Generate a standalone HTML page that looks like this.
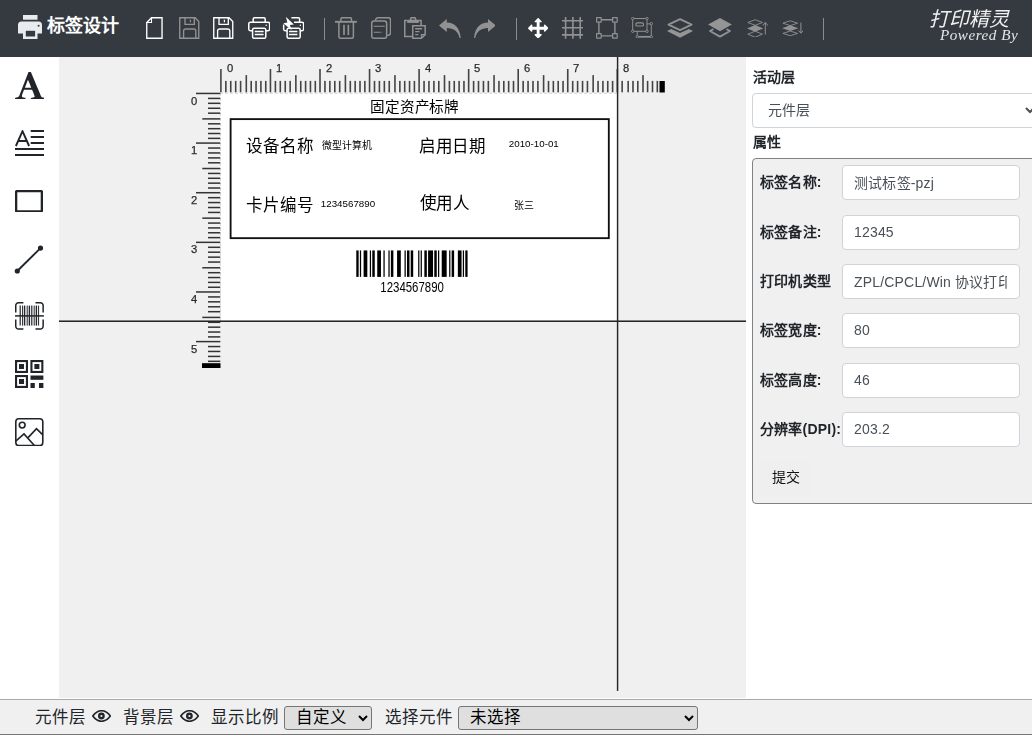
<!DOCTYPE html>
<html lang="zh-CN">
<head>
<meta charset="utf-8">
<title>标签设计</title>
<style>
*{box-sizing:border-box}
html,body{margin:0;padding:0}
body{width:1032px;height:735px;overflow:hidden;position:relative;background:#fff;font-family:"Liberation Sans",sans-serif;font-size:14px;color:#212529;line-height:1.5}
.abs{position:absolute}
#hdr{position:absolute;left:0;top:0;width:1032px;height:57px;background:#343a40}
#title{position:absolute;left:47.3px;top:13px;color:#fff;font-weight:bold;font-size:18px;line-height:27px;white-space:nowrap}
.sep{position:absolute;width:1px;background:#8a8d90}
#brand1{position:absolute;left:929px;top:7px;color:#f0f0f0;will-change:transform;font-size:20px;line-height:24px;font-style:italic;white-space:nowrap}
#brand2{position:absolute;left:940px;top:26px;color:#e6e6e6;will-change:transform;font-family:"Liberation Serif",serif;font-style:italic;font-size:15.2px;line-height:18px;white-space:nowrap;letter-spacing:.5px}
#canvas{position:absolute;left:59px;top:57px;width:687px;height:641px;background:#f0f0f0}
#paper{position:absolute;left:220px;top:93px;width:397px;height:228px;background:#fff;border-left:1px dashed #dcdcdc;border-top:1px dashed #dcdcdc}
.lt{position:absolute;white-space:nowrap;color:#000;line-height:1}
.rn{position:absolute;font-size:11.7px;line-height:12px;color:#2b2b2b;-webkit-text-stroke:.25px #2b2b2b;white-space:nowrap;transform:scaleX(.96);transform-origin:0 0}
#side{position:absolute;left:0;top:57px;width:59px;height:642px;background:#fff}
#right{position:absolute;left:746px;top:57px;width:286px;height:642px;background:#fff;overflow:hidden;will-change:transform}
#rin{position:absolute;left:-746px;top:-57px;width:1100px;height:735px}
.rl{position:absolute;font-weight:bold;font-size:14px;line-height:21px;white-space:nowrap;color:#212529;letter-spacing:.2px}
select.fc,input.fc{position:absolute;height:35px;font-family:"Liberation Sans",sans-serif;font-size:14px;line-height:21px;color:#495057;background:#fff;border:1px solid #ced4da;border-radius:4px;padding:5px 12px 7px 11px;margin:0;outline:none;letter-spacing:.18px}
#fs{position:absolute;left:752px;top:158px;width:300px;height:346px;background:#f0f0f0;border:1px solid #828282;border-radius:4px}
#btn{position:absolute;left:759px;top:461px;width:54px;height:33.5px;background:#efefef;border:0;border-radius:4px;font-size:14px;line-height:33.5px;text-align:center;color:#111;font-family:"Liberation Sans",sans-serif;padding:0}
#bar{position:absolute;left:0;top:699px;width:1032px;height:35px;background:#f0f0f0;border-top:1px solid #a9a9a9}
#barb{position:absolute;left:0;top:734px;width:1032px;height:1px;background:#767676}
.bt{position:absolute;font-size:16.5px;line-height:24px;top:705.4px;white-space:nowrap;color:#212529}
select.bs{position:absolute;top:706px;height:24px;font-family:"Liberation Sans",sans-serif;font-size:16.5px;color:#000;background:#dfdfdf;border:1px solid #767676;border-radius:3px;margin:0;padding:0 4px 2px 7px}
</style>
</head>
<body>
<div id="hdr">
<svg class="abs" style="left:18px;top:15px" width="24" height="24.2" viewBox="0 0 24 24.2"><g fill="#e9ecef"><rect x="5" y="0" width="14.5" height="4.7"/><path d="M3.5 6.4H20.5A3.5 3.5 0 0 1 24 9.9V18.6H0V9.9A3.5 3.5 0 0 1 3.5 6.4Z"/><rect x="5" y="13.4" width="14.5" height="10.8"/></g><rect x="7.8" y="15.8" width="9.3" height="5.7" fill="#343a40"/><circle cx="20.6" cy="10.8" r="1" fill="#343a40"/></svg>
<svg class="abs" style="left:146.2px;top:17px" width="16.8" height="22" viewBox="0 0 16.8 22" fill="none" stroke="#fff" stroke-width="1.35" ><path d="M5.5 .75H16.05V21.25H.75V5.5Z"/><path d="M.75 5.5H5.5V.75" stroke-width="1.1"/></svg>
<svg class="abs" style="left:179.2px;top:17px" width="20.5" height="22" viewBox="0 0 20.5 22" fill="none" stroke="#929292" stroke-width="1.35" ><path d="M.75 .75H16L19.75 4.5V21.25H.75Z"/><path d="M6 .75V7.4H15.3V.75"/><path d="M11.4 2.7V5.3" stroke-width="1.2"/><path d="M4.6 21.25V14a2 2 0 0 1 2-2H14.8a2 2 0 0 1 2 2V21.25"/></svg>
<svg class="abs" style="left:213.4px;top:17px" width="20.5" height="22" viewBox="0 0 20.5 22" fill="none" stroke="#fff" stroke-width="1.35" ><path d="M.75 .75H16L19.75 4.5V21.25H.75Z"/><path d="M6 .75V7.4H15.3V.75"/><path d="M11.4 2.7V5.3" stroke-width="1.2"/><path d="M4.6 21.25V14a2 2 0 0 1 2-2H14.8a2 2 0 0 1 2 2V21.25"/></svg>
<svg class="abs" style="left:247.5px;top:17px" width="22.4" height="22" viewBox="0 0 22.4 22" fill="none" stroke="#fff" stroke-width="1.5" color="#fff"><path d="M5.2 5.2V2a1.25 1.25 0 0 1 1.25-1.25H15.95a1.25 1.25 0 0 1 1.25 1.25V5.2"/><path d="M4.6 13.7H2.5a1.75 1.75 0 0 1-1.75-1.75V6.95a1.75 1.75 0 0 1 1.75-1.75H19.9a1.75 1.75 0 0 1 1.75 1.75V11.95a1.75 1.75 0 0 1-1.75 1.75H17.8"/><rect x="4.6" y="11.2" width="13.2" height="10.1" rx="1.6"/><path d="M6.8 14.5H15.6M6.8 17.5H15.6" stroke-width="1.3"/><circle cx="18.2" cy="8.3" r=".75" fill="currentColor" stroke="none"/></svg>
<svg class="abs" style="left:282.1px;top:17px" width="22.4" height="22" viewBox="0 0 22.4 22" fill="none" stroke="#fff" stroke-width="1.5" color="#fff"><path d="M9.4 .75H16.35a1.25 1.25 0 0 1 1.25 1.25V5.2"/><path d="M4.9 13.7H3.4a1.75 1.75 0 0 1-1.75-1.75V7.4M12 5.2H19.9a1.75 1.75 0 0 1 1.75 1.75V11.95a1.75 1.75 0 0 1-1.75 1.75H18.2"/><rect x="5.1" y="11.2" width="13.1" height="10.1" rx="1.6"/><path d="M7 14.5H15.4M7 17.5H15.4" stroke-width="1.3"/><circle cx="18.3" cy="8.3" r=".75" fill="currentColor" stroke="none"/><path d="M3.8 -.2L11.9 7.5L7.9 7.9L9.6 13.3L1.4 6.2L5.4 5.6Z" fill="#fff" stroke="none"/></svg>
<svg class="abs" style="left:335.1px;top:17px" width="21.9" height="22" viewBox="0 0 21.9 22" fill="none" stroke="#929292" stroke-width="1.5" ><path d="M5.9 4.8V2a1.25 1.25 0 0 1 1.25-1.25H15.25a1.25 1.25 0 0 1 1.25 1.25V4.8"/><path d="M0 4.8H21.9" stroke-width="1.9"/><path d="M3.9 4.8V19.75a1.5 1.5 0 0 0 1.5 1.5H16.9a1.5 1.5 0 0 0 1.5-1.5V4.8"/><path d="M9 7.8V17.9M13.35 7.8V17.9" stroke-width="1.7"/></svg>
<svg class="abs" style="left:370.8px;top:17px" width="20.3" height="22" viewBox="0 0 20.3 22" fill="none" stroke="#929292" stroke-width="1.5" ><path d="M4.6 3.6V3a2.25 2.25 0 0 1 2.25-2.25H17.3a2.25 2.25 0 0 1 2.25 2.25V16a2.25 2.25 0 0 1-2.25 2.25H16.2"/><rect x=".75" y="3.95" width="14.9" height="17.3" rx="2.25"/><path d="M2.8 9.3H13.8M2.8 15.2H9.4M10.4 15.2H11.2" stroke-width="1.1"/></svg>
<svg class="abs" style="left:404.4px;top:17px" width="21.9" height="22" viewBox="0 0 21.9 22" fill="none" stroke="#929292" stroke-width="1.5" ><path d="M3.2 3.6H.75V19.5H8.6M14.9 3.6H17.1V8.2"/><path d="M6.6 2.9V1.9a1.2 1.2 0 0 1 1.2-1.2H10.4a1.2 1.2 0 0 1 1.2 1.2V2.9" /><rect x="3.2" y="2.7" width="11.7" height="3.2" fill="#929292" stroke="none"/><path d="M8.75 8.75H21.15V17.6L17.4 21.25H8.75Z"/><path d="M21.15 17.6H17.4V21.25" stroke-width="1.1"/><path d="M11.2 11.7H18.1M11.2 14.6H15.5M11.2 17.6H14.4" stroke-width="1.4"/></svg>
<svg class="abs" style="left:439.4px;top:19px" width="21.8" height="19" viewBox="0 0 21.8 19"><path fill="#929292" d="M0 6.5L7.8 0V3.4C15.5 3.4 21.2 9 21.7 18.9H20.5C19.5 12.5 14.5 9 7.8 9V13Z"/></svg>
<svg class="abs" style="left:473.7px;top:19px" width="21.8" height="19" viewBox="0 0 21.8 19"><path transform="translate(21.8,0) scale(-1,1)" fill="#929292" d="M0 6.5L7.8 0V3.4C15.5 3.4 21.2 9 21.7 18.9H20.5C19.5 12.5 14.5 9 7.8 9V13Z"/></svg>
<svg class="abs" style="left:528px;top:17.8px" width="20.3" height="20.4" viewBox="0 -1536 1792 1792" preserveAspectRatio="none"><path transform="scale(1,-1)" fill="#fff" d="M1792 640C1792 657 1785 673 1773 685L1517 941C1505 953 1489 960 1472 960C1437 960 1408 931 1408 896V768H1024V1152H1152C1187 1152 1216 1181 1216 1216C1216 1233 1209 1249 1197 1261L941 1517C929 1529 913 1536 896 1536C879 1536 863 1529 851 1517L595 1261C583 1249 576 1233 576 1216C576 1181 605 1152 640 1152H768V768H384V896C384 931 355 960 320 960C303 960 287 953 275 941L19 685C7 673 0 657 0 640C0 623 7 607 19 595L275 339C287 327 303 320 320 320C355 320 384 349 384 384V512H768V128H640C605 128 576 99 576 64C576 47 583 31 595 19L851 -237C863 -249 879 -256 896 -256C913 -256 929 -249 941 -237L1197 19C1209 31 1216 47 1216 64C1216 99 1187 128 1152 128H1024V512H1408V384C1408 349 1437 320 1472 320C1489 320 1505 327 1517 339L1773 595C1785 607 1792 623 1792 640Z"/></svg>
<svg class="abs" style="left:561.6px;top:17px" width="21.5" height="21.8" viewBox="0 0 21.5 21.8" fill="none" stroke="#929292" stroke-width="1.6" ><path d="M3.6 0V21.8M10.9 0V21.8M18.2 0V21.8M0 3.8H21.5M0 10.7H21.5M0 17.9H21.5"/></svg>
<svg class="abs" style="left:596.2px;top:17px" width="21.8" height="22" viewBox="0 0 21.8 22" fill="none" stroke="#929292" stroke-width="1.2" ><path d="M5.4 2.7H16.4M5.4 18.9H16.4M2.9 5.4V16.4M18.9 5.4V16.4" stroke-width="1.4"/><rect x=".6" y=".6" width="4.6" height="4.6" rx=".4"/><rect x="16.6" y=".6" width="4.6" height="4.6" rx=".4"/><rect x=".6" y="16.6" width="4.6" height="4.6" rx=".4"/><rect x="16.6" y="16.6" width="4.6" height="4.6" rx=".4"/></svg>
<svg class="abs" style="left:630.7px;top:16.9px" width="22.2" height="21.4" viewBox="0 0 22.2 21.4" fill="none" stroke="#929292" stroke-width="1.0" ><rect x="1.7" y="1.5" width="14.3" height="12.8"/><rect x="4.9" y="5.9" width="7.6" height="3.1" rx="1.3" stroke-width="1.1"/><path d="M16 6.9H20.3M20.3 6.9V19.8M6.25 19.8V14.3"/><path d="M6.25 19.8H20.3" stroke-width="1.7"/><g fill="#343a40" stroke-width=".9"><circle cx="1.7" cy="1.5" r="1.2"/><circle cx="16" cy="1.5" r="1.2"/><circle cx="1.7" cy="14.3" r="1.2"/><circle cx="16" cy="14.3" r="1.2"/><circle cx="20.3" cy="6.7" r="1.2"/><circle cx="20.3" cy="19.8" r="1.2"/><circle cx="6.25" cy="19.8" r="1.2"/></g></svg>
<svg class="abs" style="left:667px;top:17.9px" width="26.2" height="20" viewBox="0 0 26.2 20" fill="none" stroke="#929292" stroke-width="1.5" ><path d="M1.5 6.6L13.05 1.1L24.6 6.6L13.05 12.1Z" stroke-width="1.9" stroke-linejoin="round"/><path d="M0 13L4.1 10.9L13.05 15.1L22 10.9L26.1 13L13.05 19.8Z" fill="#959595" stroke="none"/></svg>
<svg class="abs" style="left:708.2px;top:17.9px" width="24.2" height="20" viewBox="0 0 24.2 20" fill="none" stroke="#929292" stroke-width="1.5" ><path d="M.1 6.6L12 0L23.9 6.6L12 13.15Z" fill="#959595" stroke="none"/><path d="M4.8 11.5L2 13L12 18.6L22 13L19.2 11.5" stroke-width="1.9" stroke-linejoin="round" stroke-linecap="round"/></svg>
<svg class="abs" style="left:747.1px;top:18.5px" width="21.4" height="18.7" viewBox="0 0 21.4 18.7" fill="none" stroke="#929292" stroke-width="1.5" ><path d="M0.8 3.5L8.15 0.6999999999999998L15.5 3.5L8.15 6.3Z" stroke-width=".9"/><path d="M0.0 9.4L8.15 6.0L16.3 9.4L8.15 12.8Z" fill="#929292" stroke="none"/><path d="M0.8 15.2L8.15 12.2L15.5 15.2L8.15 18.2Z" stroke-width=".9"/><path d="M18.3 15.6V3.6M15.9 6.4L18.3 3.4L20.9 6.6" stroke-width="1"/></svg>
<svg class="abs" style="left:781.6px;top:19.6px" width="21.8" height="16.4" viewBox="0 0 21.8 16.4" fill="none" stroke="#929292" stroke-width="1.5" ><path d="M0.8999999999999997 3.2L8.25 0.8000000000000004L15.599999999999998 3.2L8.25 5.6Z" stroke-width=".9"/><path d="M0.09999999999999964 8.2L8.25 5.299999999999999L16.4 8.2L8.25 11.1Z" fill="#929292" stroke="none"/><path d="M0.8999999999999997 13.4L8.25 11.05L15.599999999999998 13.4L8.25 15.749999999999998Z" stroke-width=".9"/><path d="M18.9 2.6V12.9M16.4 10.4L18.9 13.2L21.4 10.4" stroke-width="1"/></svg>
<div id="title">标签设计</div>
<div class="sep" style="left:324px;top:18px;height:22px"></div>
<div class="sep" style="left:516px;top:18px;height:22px"></div>
<div class="sep" style="left:823px;top:18px;height:22px"></div>
<div id="brand1">打印精灵</div>
<div id="brand2">Powered By</div>
</div>
<div id="side">
</div>
<svg class="abs" style="left:14.6px;top:71.5px" width="29.7" height="27.3" viewBox="0 -1408 1664 1536" preserveAspectRatio="none"><path transform="scale(1,-1)" fill="#212529" d="M725 977C796 832 857 677 909 525C890 524 871 523 852 523C753 523 654 526 555 527ZM0 -128C63 -128 125 -125 188 -114C202 -112 222 -106 236 -106C352 -106 469 -126 585 -126C586 -117 587 -108 587 -99C587 -79 587 -60 586 -41C529 -33 382 -30 382 47C382 85 483 347 509 405L959 403C975 362 1104 65 1104 29C1104 -8 1051 -15 1024 -21L893 -49C890 -75 889 -101 889 -127C1020 -123 1151 -112 1282 -112C1409 -112 1536 -128 1663 -128C1663 -119 1664 -111 1664 -102C1664 -83 1661 -64 1658 -45C1611 -27 1519 -21 1486 5C1472 16 1458 46 1451 62C1401 164 1366 271 1321 375C1245 551 1176 730 1101 907L896 1387C893 1394 889 1401 885 1408H832H757L477 684L240 68C198 -40 96 -20 2 -49L0 -128Z"/></svg>
<svg class="abs" style="left:14.7px;top:129.5px" width="29.5" height="26.5" viewBox="0 0 29.5 26.5" fill="none" stroke="#212529" stroke-width="1.5" ><path d="M15.7 1H29.5M15.7 7H29.5M15.7 13H29.5M0 19H29.5M0 25H29.5" stroke-width="2"/><path d="M.9 16L7.5 1.2L14.1 16M3.3 11H11.7" stroke-width="1.9"/></svg>
<svg class="abs" style="left:15.2px;top:189.7px" width="28" height="22.5" viewBox="0 0 28 22.5" fill="none" stroke="#212529" stroke-width="1.5" ><rect x="1.1" y="1.1" width="25.8" height="20.3" rx="1" stroke-width="2.4"/></svg>
<svg class="abs" style="left:14px;top:244.5px" width="30" height="30" viewBox="0 0 30 30" fill="none" stroke="#212529" stroke-width="1.5" ><path d="M3.3 26L26.5 3.1" stroke-width="1.9"/><circle cx="26.5" cy="3.1" r="2.6" fill="#212529" stroke="none"/><circle cx="3.3" cy="26" r="2.6" fill="#212529" stroke="none"/></svg>
<svg class="abs" style="left:14.7px;top:302.3px" width="28.9" height="27.8" viewBox="0 0 28.9 27.8" fill="none" stroke="#212529" stroke-width="1.5" ><path d="M8.4 .75H3.5A2.75 2.75 0 0 0 .75 3.5V10.6M20.5 .75H25.4A2.75 2.75 0 0 1 28.15 3.5V10.6M8.4 27.05H3.5A2.75 2.75 0 0 1 .75 24.3V17.4M20.5 27.05H25.4A2.75 2.75 0 0 0 28.15 24.3V17.4"/><path d="M5.2 3.6V23.6" stroke-width="1.2"/><path d="M7.6 3.6V23.6" stroke-width="1"/><path d="M9.6 3.6V23.6" stroke-width="1.4"/><path d="M12.2 3.6V23.6" stroke-width="1"/><path d="M14.4 3.6V23.6" stroke-width="1.4"/><path d="M16.8 3.6V23.6" stroke-width="1.2"/><path d="M19.2 3.6V23.6" stroke-width="1"/><path d="M21.4 3.6V23.6" stroke-width="1.4"/><path d="M23.6 3.6V23.6" stroke-width="1"/><path d="M0 13.9H28.9" stroke-width="1.5"/></svg>
<svg class="abs" style="left:15.2px;top:360px" width="28.4" height="28" viewBox="0 0 28.4 28" fill="none" stroke="#212529" stroke-width="1.5" ><rect x="1.05" y="1.05" width="10.9" height="10.9" stroke-width="2.1"/><rect x="4" y="4" width="5" height="5" fill="#212529" stroke="none"/><rect x="16.45" y="1.05" width="10.9" height="10.9" stroke-width="2.1"/><rect x="19.4" y="4" width="5" height="5" fill="#212529" stroke="none"/><rect x="1.05" y="16.05" width="10.9" height="10.9" stroke-width="2.1"/><rect x="4" y="19" width="5" height="5" fill="#212529" stroke="none"/><rect x="15.5" y="15.5" width="12.9" height="4.3" fill="#212529" stroke="none"/><rect x="15.5" y="23" width="4.3" height="5" fill="#212529" stroke="none"/><rect x="24" y="23" width="4.4" height="5" fill="#212529" stroke="none"/></svg>
<svg class="abs" style="left:15px;top:417.8px" width="28.6" height="28.4" viewBox="0 0 28.6 28.4" fill="none" stroke="#212529" stroke-width="1.6" ><rect x=".8" y=".8" width="27" height="26.8" rx="3"/><circle cx="7.2" cy="7.1" r="2.9"/><path d="M.8 23.1L9 15.9L19.4 27.5M13.3 19.4L21.5 10.6L27.8 16.9"/></svg>
<div id="canvas"></div>
<div id="paper"></div>
<svg class="abs" style="left:215px;top:60px" width="460" height="34" fill="#444"><rect x="5.10" y="9.0" width="1.6" height="23.3"/><rect x="10.05" y="20.9" width="1.6" height="11.4"/><rect x="14.95" y="20.9" width="1.6" height="11.4"/><rect x="19.90" y="20.9" width="1.6" height="11.4"/><rect x="24.80" y="20.9" width="1.6" height="11.4"/><rect x="30.50" y="15.1" width="1.6" height="17.2"/><rect x="35.40" y="20.9" width="1.6" height="11.4"/><rect x="40.25" y="20.9" width="1.6" height="11.4"/><rect x="45.10" y="20.9" width="1.6" height="11.4"/><rect x="49.95" y="20.9" width="1.6" height="11.4"/><rect x="54.65" y="9.0" width="1.6" height="23.3"/><rect x="59.60" y="20.9" width="1.6" height="11.4"/><rect x="64.50" y="20.9" width="1.6" height="11.4"/><rect x="69.45" y="20.9" width="1.6" height="11.4"/><rect x="74.35" y="20.9" width="1.6" height="11.4"/><rect x="80.05" y="15.1" width="1.6" height="17.2"/><rect x="84.95" y="20.9" width="1.6" height="11.4"/><rect x="89.80" y="20.9" width="1.6" height="11.4"/><rect x="94.65" y="20.9" width="1.6" height="11.4"/><rect x="99.50" y="20.9" width="1.6" height="11.4"/><rect x="104.20" y="9.0" width="1.6" height="23.3"/><rect x="109.15" y="20.9" width="1.6" height="11.4"/><rect x="114.05" y="20.9" width="1.6" height="11.4"/><rect x="119.00" y="20.9" width="1.6" height="11.4"/><rect x="123.90" y="20.9" width="1.6" height="11.4"/><rect x="129.60" y="15.1" width="1.6" height="17.2"/><rect x="134.50" y="20.9" width="1.6" height="11.4"/><rect x="139.35" y="20.9" width="1.6" height="11.4"/><rect x="144.20" y="20.9" width="1.6" height="11.4"/><rect x="149.05" y="20.9" width="1.6" height="11.4"/><rect x="153.75" y="9.0" width="1.6" height="23.3"/><rect x="158.70" y="20.9" width="1.6" height="11.4"/><rect x="163.60" y="20.9" width="1.6" height="11.4"/><rect x="168.55" y="20.9" width="1.6" height="11.4"/><rect x="173.45" y="20.9" width="1.6" height="11.4"/><rect x="179.15" y="15.1" width="1.6" height="17.2"/><rect x="184.05" y="20.9" width="1.6" height="11.4"/><rect x="188.90" y="20.9" width="1.6" height="11.4"/><rect x="193.75" y="20.9" width="1.6" height="11.4"/><rect x="198.60" y="20.9" width="1.6" height="11.4"/><rect x="203.30" y="9.0" width="1.6" height="23.3"/><rect x="208.25" y="20.9" width="1.6" height="11.4"/><rect x="213.15" y="20.9" width="1.6" height="11.4"/><rect x="218.10" y="20.9" width="1.6" height="11.4"/><rect x="223.00" y="20.9" width="1.6" height="11.4"/><rect x="228.70" y="15.1" width="1.6" height="17.2"/><rect x="233.60" y="20.9" width="1.6" height="11.4"/><rect x="238.45" y="20.9" width="1.6" height="11.4"/><rect x="243.30" y="20.9" width="1.6" height="11.4"/><rect x="248.15" y="20.9" width="1.6" height="11.4"/><rect x="252.85" y="9.0" width="1.6" height="23.3"/><rect x="257.80" y="20.9" width="1.6" height="11.4"/><rect x="262.70" y="20.9" width="1.6" height="11.4"/><rect x="267.65" y="20.9" width="1.6" height="11.4"/><rect x="272.55" y="20.9" width="1.6" height="11.4"/><rect x="278.25" y="15.1" width="1.6" height="17.2"/><rect x="283.15" y="20.9" width="1.6" height="11.4"/><rect x="288.00" y="20.9" width="1.6" height="11.4"/><rect x="292.85" y="20.9" width="1.6" height="11.4"/><rect x="297.70" y="20.9" width="1.6" height="11.4"/><rect x="302.40" y="9.0" width="1.6" height="23.3"/><rect x="307.35" y="20.9" width="1.6" height="11.4"/><rect x="312.25" y="20.9" width="1.6" height="11.4"/><rect x="317.20" y="20.9" width="1.6" height="11.4"/><rect x="322.10" y="20.9" width="1.6" height="11.4"/><rect x="327.80" y="15.1" width="1.6" height="17.2"/><rect x="332.70" y="20.9" width="1.6" height="11.4"/><rect x="337.55" y="20.9" width="1.6" height="11.4"/><rect x="342.40" y="20.9" width="1.6" height="11.4"/><rect x="347.25" y="20.9" width="1.6" height="11.4"/><rect x="351.95" y="9.0" width="1.6" height="23.3"/><rect x="356.90" y="20.9" width="1.6" height="11.4"/><rect x="361.80" y="20.9" width="1.6" height="11.4"/><rect x="366.75" y="20.9" width="1.6" height="11.4"/><rect x="371.65" y="20.9" width="1.6" height="11.4"/><rect x="377.35" y="15.1" width="1.6" height="17.2"/><rect x="382.25" y="20.9" width="1.6" height="11.4"/><rect x="387.10" y="20.9" width="1.6" height="11.4"/><rect x="391.95" y="20.9" width="1.6" height="11.4"/><rect x="396.80" y="20.9" width="1.6" height="11.4"/><rect x="401.50" y="9.0" width="1.6" height="23.3"/><rect x="406.35" y="20.9" width="1.6" height="11.4"/><rect x="412.35" y="20.9" width="1.6" height="11.4"/><rect x="417.20" y="20.9" width="1.6" height="11.4"/><rect x="422.00" y="20.9" width="1.6" height="11.4"/><rect x="427.20" y="15.1" width="1.6" height="17.2"/><rect x="431.80" y="20.9" width="1.6" height="11.4"/><rect x="436.70" y="20.9" width="1.6" height="11.4"/><rect x="441.50" y="20.9" width="1.6" height="11.4"/><rect x="444.5" y="21" width="5.3" height="11.5" fill="#000"/></svg>
<svg class="abs" style="left:190px;top:88px" width="32" height="285" fill="#333"><rect x="6.0" y="4.70" width="24.3" height="1.5"/><rect x="18.0" y="9.66" width="12.3" height="1.5"/><rect x="18.0" y="14.57" width="12.3" height="1.5"/><rect x="18.0" y="19.52" width="12.3" height="1.5"/><rect x="18.0" y="24.43" width="12.3" height="1.5"/><rect x="12.3" y="30.14" width="18.0" height="1.5"/><rect x="18.0" y="35.05" width="12.3" height="1.5"/><rect x="18.0" y="39.91" width="12.3" height="1.5"/><rect x="18.0" y="44.76" width="12.3" height="1.5"/><rect x="18.0" y="49.62" width="12.3" height="1.5"/><rect x="6.0" y="54.33" width="24.3" height="1.5"/><rect x="18.0" y="59.29" width="12.3" height="1.5"/><rect x="18.0" y="64.20" width="12.3" height="1.5"/><rect x="18.0" y="69.15" width="12.3" height="1.5"/><rect x="18.0" y="74.06" width="12.3" height="1.5"/><rect x="12.3" y="79.77" width="18.0" height="1.5"/><rect x="18.0" y="84.68" width="12.3" height="1.5"/><rect x="18.0" y="89.54" width="12.3" height="1.5"/><rect x="18.0" y="94.39" width="12.3" height="1.5"/><rect x="18.0" y="99.25" width="12.3" height="1.5"/><rect x="6.0" y="103.96" width="24.3" height="1.5"/><rect x="18.0" y="108.92" width="12.3" height="1.5"/><rect x="18.0" y="113.82" width="12.3" height="1.5"/><rect x="18.0" y="118.78" width="12.3" height="1.5"/><rect x="18.0" y="123.69" width="12.3" height="1.5"/><rect x="12.3" y="129.40" width="18.0" height="1.5"/><rect x="18.0" y="134.31" width="12.3" height="1.5"/><rect x="18.0" y="139.16" width="12.3" height="1.5"/><rect x="18.0" y="144.02" width="12.3" height="1.5"/><rect x="18.0" y="148.88" width="12.3" height="1.5"/><rect x="6.0" y="153.59" width="24.3" height="1.5"/><rect x="18.0" y="158.55" width="12.3" height="1.5"/><rect x="18.0" y="163.45" width="12.3" height="1.5"/><rect x="18.0" y="168.41" width="12.3" height="1.5"/><rect x="18.0" y="173.32" width="12.3" height="1.5"/><rect x="12.3" y="179.03" width="18.0" height="1.5"/><rect x="18.0" y="183.94" width="12.3" height="1.5"/><rect x="18.0" y="188.79" width="12.3" height="1.5"/><rect x="18.0" y="193.65" width="12.3" height="1.5"/><rect x="18.0" y="198.51" width="12.3" height="1.5"/><rect x="6.0" y="203.22" width="24.3" height="1.5"/><rect x="18.0" y="208.18" width="12.3" height="1.5"/><rect x="18.0" y="213.08" width="12.3" height="1.5"/><rect x="18.0" y="218.04" width="12.3" height="1.5"/><rect x="18.0" y="222.95" width="12.3" height="1.5"/><rect x="12.3" y="228.66" width="18.0" height="1.5"/><rect x="18.0" y="233.57" width="12.3" height="1.5"/><rect x="18.0" y="238.42" width="12.3" height="1.5"/><rect x="18.0" y="243.28" width="12.3" height="1.5"/><rect x="18.0" y="248.14" width="12.3" height="1.5"/><rect x="6.0" y="252.85" width="24.3" height="1.5"/><rect x="18.0" y="257.80" width="12.3" height="1.5"/><rect x="18.0" y="262.71" width="12.3" height="1.5"/><rect x="18.0" y="267.67" width="12.3" height="1.5"/><rect x="18.0" y="272.58" width="12.3" height="1.5"/><rect x="12" y="275.2" width="18.5" height="4.8" fill="#000"/></svg>
<span class="rn" style="left:226.6px;top:61.9px">0</span><span class="rn" style="left:276.1px;top:61.9px">1</span><span class="rn" style="left:325.6px;top:61.9px">2</span><span class="rn" style="left:375.2px;top:61.9px">3</span><span class="rn" style="left:424.8px;top:61.9px">4</span><span class="rn" style="left:474.3px;top:61.9px">5</span><span class="rn" style="left:523.8px;top:61.9px">6</span><span class="rn" style="left:573.4px;top:61.9px">7</span><span class="rn" style="left:622.9px;top:61.9px">8</span>
<span class="rn" style="left:190.9px;top:94.5px">0</span><span class="rn" style="left:190.9px;top:144.2px">1</span><span class="rn" style="left:190.9px;top:193.8px">2</span><span class="rn" style="left:190.9px;top:243.4px">3</span><span class="rn" style="left:190.9px;top:293.1px">4</span><span class="rn" style="left:190.9px;top:342.7px">5</span>
<div id="label" style="position:absolute;left:221.0px;top:93.5px;width:640px;height:368px;transform:scale(0.62);transform-origin:0 0;filter:blur(0.45px)">
<div style="position:absolute;left:14.03px;top:39.03px;width:613.39px;height:195.32px;border:3px solid #111;box-sizing:border-box"></div>
<span class="lt" style="left:240.16px;top:10.16px;font-size:23.55px;">固定资产标牌</span>
<span class="lt" style="left:40.97px;top:71.61px;font-size:26.61px;">设备名称</span>
<span class="lt" style="left:162.90px;top:76.13px;font-size:15.97px;">微型计算机</span>
<span class="lt" style="left:319.35px;top:71.45px;font-size:26.61px;">启用日期</span>
<span class="lt" style="left:464.19px;top:72.74px;font-size:15.77px;">2010-10-01</span>
<span class="lt" style="left:40.97px;top:167.42px;font-size:26.61px;">卡片编号</span>
<span class="lt" style="left:160.97px;top:169.84px;font-size:15.77px;">1234567890</span>
<span class="lt" style="left:320.32px;top:163.55px;font-size:26.77px;">使用人</span>
<span class="lt" style="left:472.90px;top:172.42px;font-size:15.97px;">张三</span>
<svg style="position:absolute;left:218.06px;top:252.10px" width="180" height="43" viewBox="0 0 180 43" fill="#000" shape-rendering="geometricPrecision"><rect x="0" y="0" width="4" height="43"/><rect x="6" y="0" width="2" height="43"/><rect x="12" y="0" width="6" height="43"/><rect x="22" y="0" width="2" height="43"/><rect x="26" y="0" width="4" height="43"/><rect x="34" y="0" width="6" height="43"/><rect x="44" y="0" width="2" height="43"/><rect x="52" y="0" width="2" height="43"/><rect x="56" y="0" width="4" height="43"/><rect x="66" y="0" width="6" height="43"/><rect x="78" y="0" width="2" height="43"/><rect x="82" y="0" width="4" height="43"/><rect x="88" y="0" width="4" height="43"/><rect x="100" y="0" width="2" height="43"/><rect x="104" y="0" width="2" height="43"/><rect x="110" y="0" width="4" height="43"/><rect x="116" y="0" width="8" height="43"/><rect x="126" y="0" width="4" height="43"/><rect x="132" y="0" width="2" height="43"/><rect x="138" y="0" width="8" height="43"/><rect x="150" y="0" width="2" height="43"/><rect x="154" y="0" width="4" height="43"/><rect x="164" y="0" width="6" height="43"/><rect x="172" y="0" width="2" height="43"/><rect x="176" y="0" width="4" height="43"/></svg>
<span class="lt" style="left:256.77px;top:301.13px;font-size:22.90px;transform:scaleX(.805);transform-origin:0 0">1234567890</span>
</div>
<svg class="abs" style="left:59px;top:57px" width="687" height="641"><rect x="557.85" y="0" width="1.45" height="633.9" fill="#262626"/><rect x="0" y="263.45" width="687" height="1.55" fill="#262626"/></svg>
<div id="right"><div id="rin">
<span class="rl" style="left:753px;top:67px">活动层</span>
<select class="fc" style="left:752px;top:93px;width:287px"><option>元件层</option><option>背景层</option></select>
<span class="rl" style="left:753px;top:132px">属性</span>
<div id="fs"></div>
<span class="rl" style="left:760px;top:172px">标签名称:</span>
<input class="fc" style="left:842px;top:165px;width:178px" value="测试标签-pzj">
<span class="rl" style="left:760px;top:222px">标签备注:</span>
<input class="fc" style="left:842px;top:215px;width:178px" value="12345">
<span class="rl" style="left:760px;top:271px">打印机类型</span>
<input class="fc" style="left:842px;top:264px;width:178px" value="ZPL/CPCL/Win 协议打印机" readonly>
<span class="rl" style="left:760px;top:320px">标签宽度:</span>
<input class="fc" style="left:842px;top:313px;width:178px" value="80">
<span class="rl" style="left:760px;top:370px">标签高度:</span>
<input class="fc" style="left:842px;top:363px;width:178px" value="46">
<span class="rl" style="left:760px;top:419px">分辨率(DPI):</span>
<input class="fc" style="left:842px;top:412px;width:178px" value="203.2">
<button id="btn">提交</button>
</div></div>
<div id="bar"></div>
<div id="barb"></div>
<span class="bt" style="left:35px">元件层</span>
<svg class="abs" style="left:91.8px;top:709.6px" width="19.2" height="12" viewBox="0 0 19.2 12" fill="none" stroke="#212529" stroke-width="1.7" ><path d="M.8 6C3.6 2.3 6.4 .75 9.6 .75S15.6 2.3 18.4 6C15.6 9.7 12.8 11.25 9.6 11.25S3.6 9.7 .8 6Z"/><circle cx="9.4" cy="6" r="2.25" stroke-width="2.3"/></svg>
<span class="bt" style="left:123.4px">背景层</span>
<svg class="abs" style="left:179.6px;top:709.6px" width="19.2" height="12" viewBox="0 0 19.2 12" fill="none" stroke="#212529" stroke-width="1.7" ><path d="M.8 6C3.6 2.3 6.4 .75 9.6 .75S15.6 2.3 18.4 6C15.6 9.7 12.8 11.25 9.6 11.25S3.6 9.7 .8 6Z"/><circle cx="9.4" cy="6" r="2.25" stroke-width="2.3"/></svg>
<span class="bt" style="left:211px">显示比例</span>
<select class="bs" style="left:284px;width:88px"><option>自定义</option><option>100%</option></select>
<span class="bt" style="left:385px">选择元件</span>
<select class="bs" style="left:458px;width:240px"><option>未选择</option></select>
</body>
</html>
